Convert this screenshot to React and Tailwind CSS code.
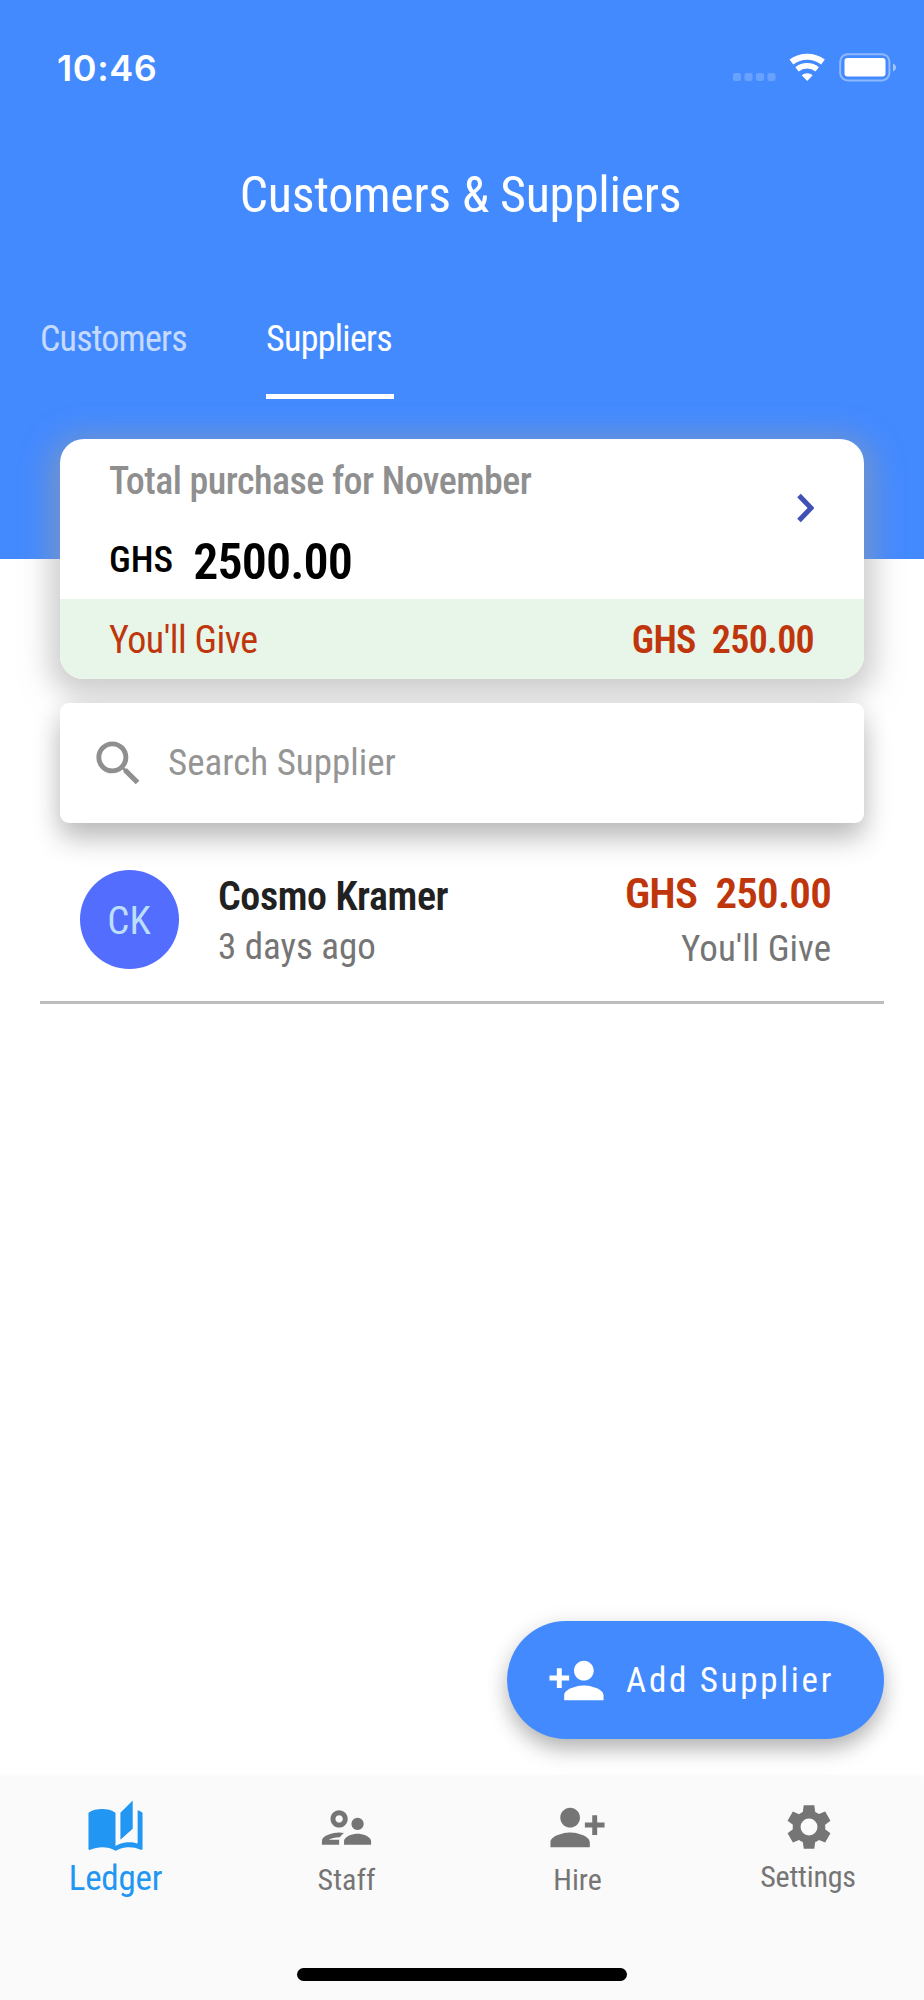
import { MdSearch, MdPersonAdd, MdPersonAddAlt1, MdOutlineSupervisorAccount } from "react-icons/md";

const StatusBar = () => {
  return (
    <div className="flex justify-between h-[134px] pl-[57px] pr-7 text-white">
      <p className="font-['Inter'] font-[560] text-[36px] leading-[136px] tracking-[0.6px]">10:46</p>
      <svg width="166" height="30" viewBox="0 0 166 30" className="mt-[52px]" fill="#fff">
        <g opacity="0.2">
          <rect x="3" y="21" width="8" height="8" rx="2" />
          <rect x="14.5" y="21" width="8" height="8" rx="2" />
          <rect x="26" y="21" width="8" height="8" rx="2" />
          <rect x="37.5" y="21" width="8" height="8" rx="2" />
        </g>
        <path d="M61 8.6A26 26 0 0 1 92.6 8.6" transform="translate(0.4 1.4)" fill="none" stroke="#fff" strokeWidth="6" />
        <path d="M67 17.3A16 16 0 0 1 87.2 17.3" fill="none" stroke="#fff" strokeWidth="5.4" />
        <path d="M71.7 23.2A8.5 8.5 0 0 1 82.7 23.2L77.2 29z" />
        <rect x="110.2" y="2.2" width="49.2" height="26.2" rx="7.5" fill="none" stroke="#fff" strokeWidth="2" opacity="0.4" />
        <rect x="114.5" y="6" width="41" height="18.5" rx="3" />
        <path d="M163 11.5c4 1.5 4 6.500 0 8z" opacity="0.5" />
      </svg>
    </div>
  );
};

const Header = () => {
  return (
    <header className="h-[559px] bg-[#448aff]">
      <StatusBar />
      <h1 className="h-[120px] pr-[3px] text-[50px] leading-[123px] tracking-[-0.3px] text-center text-white">
        Customers &amp; Suppliers
      </h1>
      <div className="flex gap-20 px-10 text-[36px]">
        <p className="w-[146px] leading-[170px] tracking-[-0.8px] text-white/70">Customers</p>
        <div>
          <p className="w-32 h-[140px] leading-[170px] tracking-[-0.7px] text-white">Suppliers</p>
          <div className="h-[5px] bg-white"></div>
        </div>
      </div>
    </header>
  );
};

const SummaryCard = () => {
  return (
    <div className="-mt-[120px] relative h-[240px] rounded-[24px] overflow-hidden bg-white">
      <div className="flex justify-between h-[160px] pl-[49px] pr-[50px]">
        <div>
          <p className="h-20 text-[38px] leading-[85px] tracking-[-0.54px] font-medium text-[#8f8f8f]">
            Total purchase for November
          </p>
          <div className="flex gap-5 text-black">
            <p className="text-[37px] leading-[82px] font-medium">GHS</p>
            <p className="text-[50px] leading-[86px] tracking-[-0.9px] font-semibold">2500.00</p>
          </div>
        </div>
        <svg width="17" height="30" viewBox="0 0 17 30" className="mt-[54px]">
          <path d="M2 2.500L14 15 2 27.500" fill="none" stroke="#3f51b5" strokeWidth="5" />
        </svg>
      </div>
      <div className="flex justify-between h-20 px-[49px] bg-[#e8f5e9] text-[#bf360c] text-[38px] leading-[82px]">
        <p className="tracking-[-0.5px]">You'll Give</p>
        <p className="mr-px font-semibold whitespace-pre tracking-[-0.7px]">GHS  250.00</p>
      </div>
    </div>
  );
};

const SearchBox = () => {
  return (
    <div className="relative mt-6 flex items-center h-[120px] pl-[29px] rounded-[9px] bg-white shadow-[0_16px_28px_0_rgba(0,0,0,0.24),0_4px_26px_0_rgba(0,0,0,0.07)]">
      <MdSearch className="size-[59px] text-[#8f8f8f]" />
      <p className="ml-5 text-[37px] text-[#959595]">Search Supplier</p>
    </div>
  );
};

const SupplierRow = () => {
  return (
    <div className="mx-10 flex h-[181px] pl-10 pr-[53px] border-b-[3px] border-[#bdbdbd]">
      <div className="mt-[47px] size-[99px] shrink-0 rounded-full bg-[#536dfe] pr-px text-center text-[39px] leading-[102px] text-[#bbdefb]">
        CK
      </div>
      <div className="ml-[39px] mt-[44px]">
        <p className="text-[40px] leading-[60px] h-[50px] tracking-[-0.4px] font-semibold text-[#212121]">Cosmo Kramer</p>
        <p className="text-[37px] leading-[60px] text-[#757575]">3 days ago</p>
      </div>
      <div className="ml-auto mt-[43px] text-right">
        <p className="text-[43px] leading-[54px] h-[50px] tracking-[-0.8px] font-semibold whitespace-pre text-[#bf360c]">
          GHS  250.00
        </p>
        <p className="text-[37px] leading-[66px] text-[#757575]">You'll Give</p>
      </div>
    </div>
  );
};

const BottomNav = () => {
  return (
    <nav className="relative h-[223px] bg-[#fafafa] shadow-[0_0_5px_rgba(0,0,0,0.06)]">
      <div className="grid grid-cols-4 h-[191px] text-center text-[30px] text-[#757575]">
        <div className="flex flex-col items-center text-[#2196f3]">
          <svg width="59" height="59" viewBox="0 0 24 24" fill="currentColor" className="mt-[21px]">
            <path d="M19 1l-5 5v11l5-4.500V1zM23 19.500V6c-.6-.45-1.250-.75-2-1v13.500c-1.100-.35-2.300-.5-3.500-.5-1.700 0-4.150.65-5.500 1.500V6C10.550 4.900 8.450 4.500 6.500 4.500S2.450 4.900 1 6v14.650c0 .25.25.5.5.5.1 0 .15-.05.25-.05C3.100 20.450 5.050 20 6.500 20c1.950 0 4.050.4 5.500 1.500 1.350-.85 3.800-1.500 5.500-1.500 1.650 0 3.350.3 4.750 1.050.1.05.15.05.25.05.25 0 .5-.25.5-.5z" />
          </svg>
          <p className="text-[35px] leading-[43px] tracking-[-0.2px]">Ledger</p>
        </div>
        <div className="flex flex-col items-center">
          <MdOutlineSupervisorAccount className="mt-[21px] size-[59px]" />
          <p className="leading-[45px]">Staff</p>
        </div>
        <div className="flex flex-col items-center">
          <MdPersonAddAlt1 className="mt-[21px] size-[59px]" />
          <p className="leading-[45px]">Hire</p>
        </div>
        <div className="flex flex-col items-center">
          <svg width="52" height="52" viewBox="0 0 24 24" fill="currentColor" className="mt-[24px]">
            <path d="M19.440 12.990c.04-.33.07-.65.07-.99s-.03-.66-.07-.99l2.450-1.900-2.430-4.220-2.870 1.160c-.52-.4-1.090-.74-1.710-1L14.440 2H9.570l-.44 3.070c-.62.26-1.190.6-1.710 1L4.550 4.890 2.110 9.110l2.450 1.900c-.04.33-.07.65-.07.99s.03.66.07.99l-2.440 1.910 2.430 4.200 2.880-1.150c.53.41 1.100.75 1.700.97L9.580 22h4.850l.44-3.080c.62-.26 1.200-.6 1.710-.97l2.880 1.150 2.430-4.200zM12 15.900a3.900 3.900 0 1 1 0-7.800 3.900 3.900 0 0 1 0 7.800z" />
          </svg>
          <p className="pr-px leading-[48px] tracking-[-0.2px]">Settings</p>
        </div>
      </div>
      <div className="mx-auto w-[330px] h-[13px] rounded-full bg-black"></div>
    </nav>
  );
};

const App = () => {
  return (
    <div className="flex flex-col w-[924px] h-[2000px] overflow-hidden bg-white font-['Roboto_Condensed','Roboto',sans-serif] font-stretch-condensed">
      <Header />
      <section className="mx-[60px]">
        <div className="relative rounded-[24px] shadow-[0_7px_28px_11px_rgba(158,158,158,0.5)]">
          <SummaryCard />
        </div>
        <SearchBox />
      </section>
      <SupplierRow />
      <div className="relative mt-auto mr-10 mb-[38px] self-end flex items-center w-[377px] h-[118px] pl-10 rounded-full bg-[#448aff] text-white shadow-[0_12px_22px_-2px_rgba(0,0,0,0.26),0_3px_24px_0_rgba(0,0,0,0.09)]">
        <MdPersonAdd className="size-[59px]" />
        <p className="mt-[3px] ml-5 text-[35px] tracking-[2.7px]">Add Supplier</p>
      </div>
      <BottomNav />
    </div>
  );
};

export default App;
